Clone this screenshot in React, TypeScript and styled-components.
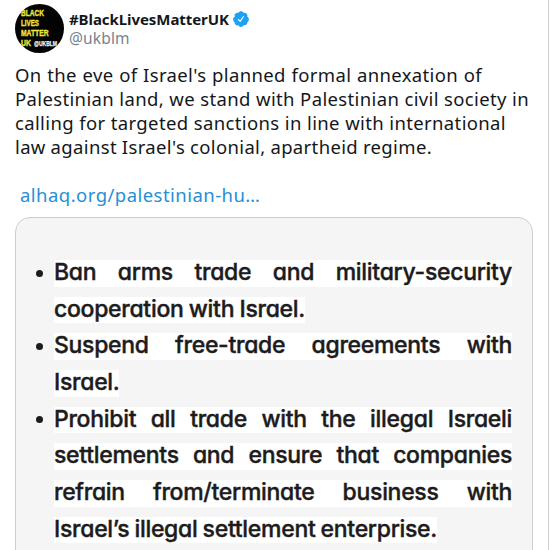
import styled, { createGlobalStyle } from "styled-components"

const color = {
  text: '#14171a',
  muted: '#75838f',
  link: '#2490d8',
  badge: '#1da1f2',
  border: '#cbcecf',
  panel: '#f5f5f5',
  ink: '#1d1b1c',
  white: '#ffffff',
}

const GlobalStyle = createGlobalStyle`
  * {
    box-sizing: border-box;
  }

  body {
    margin: 0;
    background: ${color.white};
    overflow: hidden;
  }
`

const Tweet = styled.article`
  width: 549px;
  height: 550px;
  padding: 4px 16px 0 15px;
  overflow: hidden;
  border-right: 1px solid #cccccc;
  color: ${color.text};
  font-family: "Noto Sans", "Open Sans", sans-serif;
`

const Header = styled.header`
  display: flex;
  gap: 5px;
  height: 49px;
`

const Account = styled.div`
  padding-top: 5px;
`

const NameRow = styled.div`
  display: flex;
  align-items: center;
  gap: 3px;
  height: 20px;
`

const Name = styled.span`
  font-size: 15px;
  font-weight: 700;
  line-height: 20px;
  letter-spacing: -0.07px;
`

const Handle = styled.div`
  color: ${color.muted};
  font-size: 15.5px;
  line-height: 19px;
  letter-spacing: 0.15px;
`

const Body = styled.div`
  padding-top: 10px;
  font-size: 18.5px;
  line-height: 24px;
  letter-spacing: 0.36px;
  word-spacing: -1.5px;
`

const BodyLine = styled.div<{ $width: number }>`
  width: ${({ $width }) => $width}px;
  white-space: nowrap;
  text-align-last: justify;
`

const Link = styled.a`
  display: block;
  margin: 24px 0 0 5px;
  color: ${color.link};
  font-size: 18.5px;
  line-height: 24px;
  letter-spacing: 0.46px;
`

const Card = styled.div`
  width: 518px;
  height: 360px;
  margin-top: 10px;
  padding: 42px 0 0 38px;
  border: 1px solid ${color.border};
  border-radius: 15px;
  background: ${color.panel};
`

const DemandList = styled.ul`
  margin: 0;
  padding: 0;
  list-style: none;
  color: ${color.ink};
  font-family: Inter, "Open Sans", sans-serif;
  font-size: 23px;
  font-weight: 500;
  font-feature-settings: "cv11";
  letter-spacing: -0.3px;
  -webkit-text-stroke: 0.4px ${color.ink};
`

const Demand = styled.li`
  position: relative;

  &::before {
    content: "";
    position: absolute;
    top: 9.5px;
    left: -18px;
    width: 7px;
    height: 7px;
    border-radius: 50%;
    background: ${color.ink};
  }
`

const DemandLine = styled.div<{ $width: number }>`
  width: ${({ $width }) => $width}px;
  height: 26.5px;
  margin-bottom: 10.2px;
  background: ${color.white};
  line-height: 25px;
  white-space: nowrap;
  word-spacing: -4px;
  text-align-last: justify;
`

const bodyLines = [
  { text: "On the eve of Israel's planned formal annexation of", width: 467 },
  { text: 'Palestinian land, we stand with Palestinian civil society in', width: 514 },
  { text: 'calling for targeted sanctions in line with international', width: 491 },
  { text: "law against Israel's colonial, apartheid regime.", width: 417 },
]

const demands = [
  [
    { text: 'Ban arms trade and military-security', width: 458 },
    { text: 'cooperation with Israel.', width: 251 },
  ],
  [
    { text: 'Suspend free-trade agreements with', width: 458 },
    { text: 'Israel.', width: 65 },
  ],
  [
    { text: 'Prohibit all trade with the illegal Israeli', width: 458 },
    { text: 'settlements and ensure that companies', width: 458 },
    { text: 'refrain from/terminate business with', width: 458 },
    { text: 'Israel’s illegal settlement enterprise.', width: 383 },
  ],
]

function Avatar() {
  return (
    <svg width="49" height="49" viewBox="0 0 49 49">
      <defs>
        <clipPath id="avatar">
          <circle cx="24.5" cy="24.5" r="24.5" />
        </clipPath>
      </defs>
      <g clipPath="url(#avatar)" fontFamily="Liberation Sans, sans-serif" fontWeight="700" fontSize="8.8" fill="#efe83a">
        <rect width="49" height="49" fill="#030303" />
        <g stroke="#efe83a" strokeWidth="0.35">
          <text x="6" y="12" textLength="23" lengthAdjust="spacingAndGlyphs">BLACK</text>
          <text x="6" y="22" textLength="18" lengthAdjust="spacingAndGlyphs">LIVES</text>
          <text x="6" y="32" textLength="27.5" lengthAdjust="spacingAndGlyphs">MATTER</text>
          <text x="6" y="42" textLength="10" lengthAdjust="spacingAndGlyphs">UK</text>
        </g>
        <text x="19" y="41.5" fontSize="6.5" fill="#f2f2f2" stroke="#f2f2f2" strokeWidth="0.25" textLength="23" lengthAdjust="spacingAndGlyphs">@UKBLM</text>
      </g>
    </svg>
  )
}

function VerifiedBadge() {
  return (
    <svg width="18" height="18" viewBox="0 0 24 24" fill={color.badge}>
      <path d="M22.5 12.5c0-1.58-.875-2.95-2.148-3.6.154-.435.238-.905.238-1.4 0-2.21-1.71-3.998-3.818-3.998-.47 0-.92.084-1.336.25C14.818 2.415 13.51 1.5 12 1.5s-2.816.917-3.437 2.25c-.415-.165-.866-.25-1.336-.25-2.11 0-3.818 1.79-3.818 4 0 .494.083.964.237 1.4-1.272.65-2.147 2.018-2.147 3.6 0 1.495.782 2.798 1.942 3.486-.02.17-.032.34-.032.514 0 2.21 1.708 4 3.818 4 .47 0 .92-.086 1.335-.25.62 1.334 1.926 2.25 3.437 2.25 1.512 0 2.818-.916 3.437-2.25.415.163.865.248 1.336.248 2.11 0 3.818-1.79 3.818-4 0-.174-.012-.344-.033-.513 1.158-.687 1.943-1.99 1.943-3.484zm-6.616-3.334l-4.334 6.5c-.145.217-.382.334-.625.334-.143 0-.288-.04-.416-.126l-.115-.094-2.415-2.415c-.293-.293-.293-.768 0-1.06s.768-.294 1.06 0l1.77 1.767 3.825-5.74c.23-.345.696-.436 1.04-.207.346.23.44.696.21 1.04z" />
    </svg>
  )
}

export default function App() {
  return (
    <>
      <GlobalStyle />
      <Tweet>
        <Header>
          <Avatar />
          <Account>
            <NameRow>
              <Name>#BlackLivesMatterUK</Name>
              <VerifiedBadge />
            </NameRow>
            <Handle>@ukblm</Handle>
          </Account>
        </Header>
        <Body>
          {bodyLines.map(({ text, width }) => (
            <BodyLine key={text} $width={width}>{text}</BodyLine>
          ))}
        </Body>
        <Link>alhaq.org/palestinian-hu…</Link>
        <Card>
          <DemandList>
            {demands.map((lines) => (
              <Demand key={lines[0].text}>
                {lines.map(({ text, width }) => (
                  <DemandLine key={text} $width={width}>{text}</DemandLine>
                ))}
              </Demand>
            ))}
          </DemandList>
        </Card>
      </Tweet>
    </>
  )
}
